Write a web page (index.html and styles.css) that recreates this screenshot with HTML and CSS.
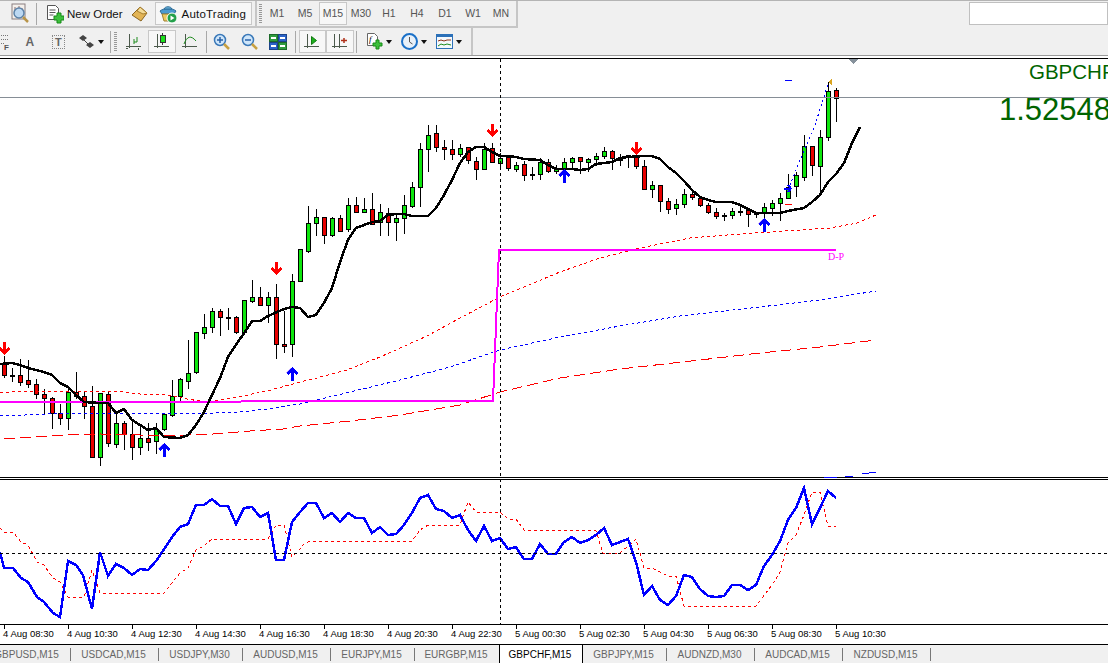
FILE: index.html
```html
<!DOCTYPE html>
<html lang="en">
<head>
  <meta charset="UTF-8">
  <title>GBPCHF,M15</title>
  <link rel="stylesheet" href="styles.css">
</head>
<body>
  <div id="toolbars">
    <div class="row row-top">
      <div class="bar bar-main">
        <span class="btn first-btn">
          <svg width="20" height="22" viewBox="0 0 20 22"><rect x="2" y="1" width="13" height="15" fill="#f4f0ec" stroke="#8a7f80"/><path d="M5 4v9M9 3v7M12 5v8" stroke="#8a6a6a"/><circle cx="9" cy="10" r="5" fill="#bcd8f2" stroke="#5c82a8" stroke-width="1.5"/><path d="M13 14l5 5" stroke="#b8954a" stroke-width="2.5"/></svg>
        </span>
        <span class="sep sep-a"></span>
        <span class="btn new-order">
          <svg width="18" height="20" viewBox="0 0 18 20"><path d="M1.5 1.5h8l3 3v11h-11z" fill="#fff" stroke="#555"/><path d="M3.5 6h6M3.5 8.500h6M3.500 11h4" stroke="#555"/><path d="M8 12h3V9h4v3h3v4h-3v3h-4v-3H8z" fill="#3cc03c" stroke="#178a17"/></svg>
          <span class="label">New Order</span>
        </span>
        <span class="btn gold">
          <svg width="18" height="18" viewBox="0 0 18 18"><path d="M1 10L9 2l7 6-6 8z" fill="#e2b455" stroke="#8a6420"/><path d="M9 2l7 6-4 1-6-3z" fill="#f4dc98" stroke="#a87f30"/></svg>
        </span>
        <span class="btn auto-trading">
          <svg width="19" height="20" viewBox="0 0 19 20"><path d="M1 7c3-3 13-3 16 0l-2 3H3z" fill="#4a9ad0" stroke="#2d6b96"/><path d="M5 5c1-3 7-3 8 0z" fill="#6fb8e0" stroke="#2d6b96"/><path d="M3 10h12l-1 7H5z" fill="#ecc860" stroke="#a08030"/><circle cx="13" cy="14" r="5" fill="#22a04a" stroke="#fff"/><path d="M11.500 11.500l4 2.500-4 2.500z" fill="#fff"/></svg>
          <span class="label label-wide">AutoTrading</span>
        </span>
      </div>
      <div class="bar bar-periods">
        <span class="grip"></span>
        <span class="tf">M1</span>
        <span class="tf">M5</span>
        <span class="tf tf-on">M15</span>
        <span class="tf">M30</span>
        <span class="tf">H1</span>
        <span class="tf">H4</span>
        <span class="tf">D1</span>
        <span class="tf">W1</span>
        <span class="tf">MN</span>
      </div>
      <input class="search" type="text">
    </div>

    <div class="row row-bottom">
      <div class="bar bar-tools">
        <span class="tool-f">
          <svg width="10" height="18" viewBox="0 0 10 18"><path d="M1 2.500h8M1 6.500h8M1 10.500h4" stroke="#777" stroke-dasharray="1 1"/></svg>
          <span class="f-letter">F</span>
        </span>
        <span class="letter-a">A</span>
        <span class="tool-t">T</span>
        <span class="tool-arrows">
          <svg width="17" height="16" viewBox="0 0 17 16"><path d="M1 4l4-3 4 3-4 3zM8 11l4-3 4 3-4 3z" fill="#444"/><path d="M5 5l6 6" stroke="#444"/></svg>
          <i class="caret"></i>
        </span>
        <span class="sep sep-b"></span>
        <span class="grip"></span>
        <span class="icon28 first-chart">
          <svg width="18" height="18" viewBox="0 0 18 18"><path d="M4.500 1v14M1 13.500h15" stroke="#4c5a4c"/><path d="M13.500 15v2M1 15.500h2" stroke="#4c5a4c"/><path d="M9 11V6M12 4v5H9" fill="none" stroke="#1c8a1c"/></svg>
        </span>
        <span class="icon28 pressed">
          <svg width="18" height="18" viewBox="0 0 18 18"><path d="M4.500 1v14M1 13.500h15" stroke="#4c5a4c"/><path d="M9.500 0v12" stroke="#333"/><rect x="7.500" y="2.500" width="5" height="7" fill="#1ce01c" stroke="#333"/></svg>
        </span>
        <span class="icon28">
          <svg width="18" height="18" viewBox="0 0 18 18"><path d="M4.500 1v14M1 13.500h15" stroke="#4c5a4c"/><path d="M3 11c3-8 7-9 12-3" fill="none" stroke="#1c8a1c"/></svg>
        </span>
        <span class="sep sep-c"></span>
        <span class="icon28">
          <svg width="18" height="18" viewBox="0 0 18 18"><circle cx="7" cy="7" r="5.500" fill="#cfe6fa" stroke="#3a78b8" stroke-width="1.500"/><path d="M4 7h6M7 4v6" stroke="#2a62a8" stroke-width="1.500"/><path d="M11 11l5 5" stroke="#c8a040" stroke-width="2.500"/></svg>
        </span>
        <span class="icon28">
          <svg width="18" height="18" viewBox="0 0 18 18"><circle cx="7" cy="7" r="5.500" fill="#cfe6fa" stroke="#3a78b8" stroke-width="1.500"/><path d="M4 7h6" stroke="#2a62a8" stroke-width="1.500"/><path d="M11 11l5 5" stroke="#c8a040" stroke-width="2.500"/></svg>
        </span>
        <span class="icon28">
          <svg width="18" height="16" viewBox="0 0 18 16"><rect x="0.500" y="0.500" width="8" height="7" fill="#2e9c3e" stroke="#1c6a2a"/><rect x="9.500" y="0.500" width="8" height="7" fill="#2a62c8" stroke="#1c4488"/><rect x="0.500" y="8.500" width="8" height="7" fill="#2a62c8" stroke="#1c4488"/><rect x="9.500" y="8.500" width="8" height="7" fill="#2e9c3e" stroke="#1c6a2a"/><path d="M2 4h5M11 4h5M2 12h5M11 12h5" stroke="#fff" stroke-width="2"/></svg>
        </span>
        <span class="sep sep-d"></span>
        <span class="icon28 pressed">
          <svg width="18" height="18" viewBox="0 0 18 18"><path d="M4.500 1v14M1 13.500h15" stroke="#4c5a4c"/><path d="M8.500 3.500l5 4-5 4z" fill="#1cb01c" stroke="#127a12"/></svg>
        </span>
        <span class="icon28 pressed">
          <svg width="18" height="18" viewBox="0 0 18 18"><path d="M3.500 1v14M8.500 1v14M1 13.500h15" stroke="#4c5a4c"/><path d="M10 7.500h6M13 5v5" stroke="#b03018" stroke-width="1.500"/></svg>
        </span>
        <span class="sep sep-e"></span>
        <span class="tool-drop">
          <svg width="17" height="17" viewBox="0 0 17 17"><path d="M1.500 0.500h7l3 3v9h-10z" fill="#fff" stroke="#666"/><text class="f-mark" x="3" y="9">f</text><path d="M7 10h3V7h3v3h3v3h-3v3h-3v-3H7z" fill="#3cc03c" stroke="#178a17"/></svg>
          <i class="caret"></i>
        </span>
        <span class="tool-drop">
          <svg width="17" height="17" viewBox="0 0 17 17"><circle cx="8.500" cy="8.500" r="7.500" fill="#e8f0f8" stroke="#1a70c8" stroke-width="2"/><path d="M8.500 4v5l3 2" fill="none" stroke="#555"/></svg>
          <i class="caret"></i>
        </span>
        <span class="tool-drop">
          <svg width="17" height="15" viewBox="0 0 17 15"><rect x="0.500" y="0.500" width="16" height="14" fill="#f4f8fc" stroke="#2c70b8"/><rect x="1" y="1" width="15" height="2" fill="#2c70b8"/><path d="M2 7l3-1 3 1 3-1 4 0" fill="none" stroke="#8a3018"/><path d="M2 12l3-2 3 1 3-1 4 1" fill="none" stroke="#1c8a1c"/></svg>
          <i class="caret"></i>
        </span>
      </div>
    </div>
  </div>

  <svg id="chart" viewBox="0 56 1108 569" width="1108" height="569">
    <path class="frame" d="M0 58.500h1108M0 477.500h1108M0 479.500h1108M0 624.500h1108"/>
    <g id="candles"></g>
    <g id="lines"></g>
    <path class="price-line" d="M0 97.500h1108"/>
    <path class="cross" d="M500.500 59v565"/>
    <path class="level" d="M0 553.500h1108"/>
    <path class="shift-mark" d="M849 59h9l-4.500 5z"/>
    <path class="gold-mark" d="M832 78v7l-4-3z"/>
    <path class="dash-blue" d="M785 80.500h7"/>
    <path class="dash-red" d="M785 204.500h7"/>
    <path class="arrow-blue" d="M784 188.500h7M788 185l3 3.500-3 3.500"/>
    <text class="symbol" x="1029" y="79">GBPCHF</text>
    <text class="price" x="999" y="120">1.52548</text>
    <text class="dp" x="828" y="260">D-P</text>
  </svg>

  <div id="axis">
    <span class="tick">4 Aug 08:30</span>
    <span class="tick">4 Aug 10:30</span>
    <span class="tick">4 Aug 12:30</span>
    <span class="tick">4 Aug 14:30</span>
    <span class="tick">4 Aug 16:30</span>
    <span class="tick">4 Aug 18:30</span>
    <span class="tick">4 Aug 20:30</span>
    <span class="tick">4 Aug 22:30</span>
    <span class="tick">5 Aug 00:30</span>
    <span class="tick">5 Aug 02:30</span>
    <span class="tick">5 Aug 04:30</span>
    <span class="tick">5 Aug 06:30</span>
    <span class="tick">5 Aug 08:30</span>
    <span class="tick">5 Aug 10:30</span>
  </div>

  <div id="tabs">
    <span class="tab tab-wide tab-clipped">GBPUSD,M15</span>
    <span class="tab tab-wide">USDCAD,M15</span>
    <span class="tab">USDJPY,M30</span>
    <span class="tab tab-wide">AUDUSD,M15</span>
    <span class="tab">EURJPY,M15</span>
    <span class="tab tab-before">EURGBP,M15</span>
    <span class="tab tab-active">GBPCHF,M15</span>
    <span class="tab">GBPJPY,M15</span>
    <span class="tab tab-wide">AUDNZD,M30</span>
    <span class="tab tab-wide">AUDCAD,M15</span>
    <span class="tab tab-wide">NZDUSD,M15</span>
  </div>

  <script src="chart.js"></script>
</body>
</html>
```

FILE: styles.css
```css
html, body {
  margin: 0;
  height: 100%;
  overflow: hidden;
}

body {
  width: 1108px;
  height: 663px;
  display: flex;
  flex-direction: column;
  background-color: #fff;
  font-family: "Liberation Sans", Arial, sans-serif;
}

#toolbars {
  height: 54px;
  background-color: #f0f0f0;
  border-top: 1px solid #b4b4b4;
  border-bottom: 1px solid #9a9a9a;
  box-shadow: 0 1px 0 #c8c8c8;
}

.row {
  display: flex;
}

.row-top {
  height: 27px;
}

.row-bottom {
  height: 27px;
}

.bar {
  display: flex;
  align-items: center;
  box-sizing: border-box;
  height: 100%;
  border-right: 2px solid #c6c6c6;
}

.row-top .bar {
  border-bottom: 2px solid #c6c6c6;
}

.bar-main {
  width: 257px;
}

.bar-periods {
  width: 261px;
}

.btn {
  display: flex;
  align-items: center;
}

.first-btn {
  margin-left: 10px;
}

.sep {
  width: 1px;
  height: 22px;
  background-color: #a8a8a8;
}

.sep-a {
  margin-left: 6px;
}

.new-order {
  margin-left: 9px;
  gap: 3px;
}

.gold {
  margin-left: 8px;
}

.auto-trading {
  box-sizing: border-box;
  height: 23px;
  width: 97px;
  margin-left: 6px;
  padding-left: 3px;
  gap: 4px;
  border: 1px solid #c8c8c8;
  background-color: #f7f7f7;
}

.label {
  font-size: 11.500px;
  color: #111;
}

.label-wide {
  letter-spacing: 0.2px;
}

.grip {
  width: 3px;
  height: 20px;
  margin-left: 2px;
  background: repeating-linear-gradient(#999 0 1px, transparent 1px 2px);
}

.tf {
  box-sizing: border-box;
  width: 28px;
  height: 23px;
  line-height: 21px;
  text-align: center;
  font-size: 10.500px;
  color: #555;
  border: 1px solid transparent;
}

.bar-periods .grip + .tf {
  margin-left: 1px;
}

.tf-on {
  border-color: #c8c8c8;
  background-color: #f7f7f7;
}

.search {
  box-sizing: border-box;
  width: 139px;
  height: 23px;
  margin: 1px 0 0 auto;
  padding: 0;
  background-color: #fff;
  border: 1px solid #c0c0c0;
}

.bar-tools {
  width: 473px;
}

.tool-f {
  display: flex;
  width: 10px;
  position: relative;
}

.f-letter {
  position: absolute;
  left: 4px;
  top: 10px;
  font-size: 8px;
  font-weight: bold;
  color: #555;
}

.letter-a {
  width: 12px;
  margin-left: 14px;
  text-align: center;
  font-size: 12px;
  font-weight: bold;
  color: #666;
}

.tool-t {
  box-sizing: border-box;
  width: 13px;
  height: 14px;
  margin-left: 16px;
  line-height: 12px;
  text-align: center;
  font-size: 11px;
  font-weight: bold;
  color: #666;
  border: 1px dotted #888;
}

.tool-arrows {
  display: flex;
  align-items: center;
  margin-left: 13px;
  gap: 3px;
}

.caret {
  width: 0;
  height: 0;
  border-left: 3.500px solid transparent;
  border-right: 3.500px solid transparent;
  border-top: 4px solid #111;
}

.sep-b {
  margin-left: 6px;
}

.first-chart {
  margin-left: 4px;
}

.row-bottom .grip {
  margin-left: 3px;
}

.icon28 {
  box-sizing: border-box;
  display: flex;
  align-items: center;
  justify-content: center;
  width: 28px;
  height: 23px;
  border: 1px solid transparent;
}

.pressed {
  border-color: #c8c8c8;
  background-color: #f7f7f7;
}

.sep-c {
  margin: 0 2px;
}

.sep-d {
  margin: 0 3px;
}

.sep-e {
  margin: 0 9px 0 2px;
}

.tool-drop {
  display: flex;
  align-items: center;
  gap: 3px;
  margin-right: 9px;
}

.f-mark {
  font-family: "Liberation Serif", serif;
  font-size: 9px;
  font-style: italic;
}

#chart {
  display: block;
  flex: none;
  background-color: #fff;
}

#chart path,
#chart polyline {
  fill: none;
  shape-rendering: crispEdges;
}

.frame {
  stroke: #000;
}

.price-line {
  stroke: #868e96;
}

.cross {
  stroke: #000;
  stroke-dasharray: 3 3;
}

.level {
  stroke: #000;
  stroke-dasharray: 3 3;
}

#chart .shift-mark {
  fill: #87929c;
}

#chart .gold-mark {
  fill: #daa520;
}

.dash-blue,
.arrow-blue {
  stroke: #00f;
}

.dash-red {
  stroke: #f00;
}

.arrow-blue {
  stroke-width: 2;
}

.symbol {
  font-family: "Liberation Sans", Arial, sans-serif;
  font-size: 20.500px;
  fill: #006400;
}

.price {
  font-family: "Liberation Sans", Arial, sans-serif;
  font-size: 31px;
  fill: #006400;
}

.dp {
  font-family: "Liberation Serif", serif;
  font-size: 10px;
  fill: #f0f;
}

.wick {
  stroke: #000;
}

.up {
  fill: #0ee60e;
  stroke: #000;
}

.down {
  fill: #e80000;
  stroke: #000;
}

.ma {
  stroke: #000;
  stroke-width: 2.500;
}

.magenta {
  stroke: #f0f;
  stroke-width: 2;
}

.red-dots {
  stroke: #f00;
  stroke-dasharray: 3 3;
}

.blue-dots {
  stroke: #00f;
  stroke-dasharray: 3 3;
}

.blue-bottom {
  stroke: #00f;
}

.red-long {
  stroke: #f00;
  stroke-dasharray: 11 5;
}

.blue-fast {
  stroke: #00f;
  stroke-dasharray: 2 3;
}

.stoch {
  stroke: #00f;
  stroke-width: 2.500;
}

.signal {
  stroke: #f00;
  stroke-dasharray: 3 3;
}

.arrow-up {
  stroke: #00f;
}

.arrow-down {
  stroke: #f00;
}

.halo-up {
  stroke: #c4a8ff;
}

.halo-down {
  stroke: #ffb070;
}

#chart .arrow-up,
#chart .arrow-down {
  stroke-width: 2.500;
}

#chart .halo-up,
#chart .halo-down {
  stroke-width: 3.500;
}

#axis {
  display: flex;
  flex: none;
  height: 19px;
  padding-left: 3px;
  background-color: #fff;
}

.tick {
  flex: none;
  width: 64px;
  padding-top: 3px;
  box-sizing: border-box;
  line-height: 12px;
  font-size: 9.500px;
  color: #000;
  background: linear-gradient(#000, #000) 1px 0 / 1px 4px no-repeat;
}

#tabs {
  display: flex;
  flex: none;
  height: 19px;
  box-sizing: border-box;
  overflow: hidden;
  background-color: #f0f0f0;
  border-top: 1px solid #000;
}

.tab {
  flex: none;
  box-sizing: border-box;
  width: 84px;
  height: 13px;
  margin-top: 3px;
  padding-right: 2px;
  line-height: 13px;
  text-align: center;
  font-size: 10px;
  color: #666;
  border-right: 1px solid #777;
}

.tab-wide {
  width: 88px;
}

.tab-clipped {
  margin-left: -17px;
  padding-right: 0;
}

.tab-before {
  border-right: 0;
}

.tab-active {
  height: 19px;
  margin-top: -1px;
  padding-top: 3px;
  color: #000;
  background-color: #fff;
  border-left: 1px solid #000;
  border-right: 1px solid #000;
  border-top: 1px solid #000;
}
```

FILE: chart.js
```js
// bars are 8px apart, first one at x=4. each row: high, top of body, bottom of body, low, direction
const bars = [
  [356,363,375,377,'d'],[368,375,375,381,'d'],[359,375,382,385,'d'],[360,380,384,387,'d'],
  [379,384,394,398,'d'],[389,394,398,413,'d'],[397,398,413,428,'d'],[404,413,418,424,'d'],
  [388,392,418,429,'u'],[372,392,396,398,'d'],[392,396,406,418,'d'],[386,406,457,457,'d'],
  [393,393,457,465,'u'],[392,394,443,446,'d'],[413,423,444,447,'u'],[421,423,434,449,'d'],
  [420,434,447,459,'d'],[427,438,447,454,'u'],[423,438,442,450,'d'],[423,429,441,453,'u'],
  [413,414,429,430,'u'],[380,396,415,416,'u'],[378,379,396,401,'u'],[340,373,381,388,'u'],
  [332,332,372,373,'u'],[314,327,333,338,'u'],[308,311,327,332,'u'],[309,311,317,335,'d'],
  [308,317,317,329,'d'],[316,317,332,333,'d'],[300,300,332,332,'u'],[280,297,301,302,'u'],
  [287,297,305,305,'d'],[292,297,305,322,'u'],[284,297,344,358,'d'],[311,344,346,352,'d'],
  [274,281,344,356,'u'],[249,249,281,281,'u'],[206,223,251,252,'u'],[209,217,223,235,'u'],
  [217,217,235,243,'d'],[217,218,235,236,'u'],[215,218,231,231,'d'],[198,205,229,231,'u'],
  [197,205,212,212,'d'],[198,209,212,212,'u'],[193,209,224,224,'d'],[204,212,222,235,'u'],
  [208,213,222,235,'d'],[213,218,222,240,'u'],[195,205,218,233,'u'],[182,187,206,207,'u'],
  [143,149,187,206,'u'],[125,135,149,171,'u'],[125,133,147,151,'d'],[140,147,149,159,'d'],
  [140,149,154,159,'d'],[144,148,154,156,'u'],[147,147,160,163,'d'],[157,161,169,179,'d'],
  [143,149,169,169,'u'],[143,148,162,162,'d'],[153,158,163,167,'u'],[155,157,168,170,'d'],
  [162,165,169,171,'u'],[161,164,175,180,'d'],[167,174,174,179,'d'],[158,162,174,179,'u'],
  [159,162,171,172,'d'],[165,169,171,173,'u'],[158,162,169,180,'u'],[157,158,162,167,'u'],
  [157,157,161,173,'d'],[158,159,162,171,'u'],[153,156,159,165,'u'],[147,151,156,158,'u'],
  [150,151,158,169,'d'],[154,159,159,165,'d'],[155,155,157,167,'u'],[145,157,166,168,'d'],
  [160,166,189,189,'d'],[181,185,189,197,'u'],[185,185,201,211,'d'],[198,201,209,213,'d'],
  [199,204,208,214,'u'],[189,194,204,207,'u'],[190,194,197,199,'d'],[196,198,205,206,'d'],
  [203,205,212,213,'d'],[208,212,216,218,'d'],[213,215,215,220,'d'],[208,211,215,218,'u'],
  [207,211,211,215,'d'],[208,210,214,226,'d'],[212,213,213,217,'d'],[203,207,213,220,'u'],
  [200,203,208,215,'u'],[193,198,203,220,'u'],[174,187,198,198,'u'],[172,175,186,196,'u'],
  [135,146,177,180,'u'],[146,146,165,175,'d'],[130,137,166,192,'u'],[82,91,137,140,'u'],
  [88,90,98,121,'d']
];

const series = [
  ['red-long', '4,439 33,437 67,435 100,434 140,435 187,435 213,434 250,431 283,429 300,426 350,421 400,415 460,405 500,392 560,378 620,369 700,360 760,353 820,347 876,340'],
  ['blue-dots', '0,416 25,415 45,414 83,413 133,413 167,413 187,414 213,413 240,412 267,409 300,404 350,392 400,380 450,367 500,350 560,337 620,326 680,316 760,307 820,300 876,291'],
  ['red-dots', '0,393 25,391 67,391 100,391 123,392 140,394 167,395 187,399 200,401 213,401 233,398 267,391 300,382 313,379 347,370 380,357 427,336 460,318 500,297 560,272 600,258 640,248 690,238 740,234 770,232 830,228 857,223 876,215'],
  ['blue-bottom', '824,477 837,477'],
  ['blue-bottom', '845,477 853,476'],
  ['blue-bottom', '862,474 876,472'],
  ['blue-fast', '788,190 800,160 815,125 828,84'],
  ['magenta', '0,402 493,401 499,250 836,250'],
  ['ma', '0,364 12,363 20,365 28,368 36,370 44,372 52,375 60,383 68,387 76,395 84,402 100,403 108,403 116,413 124,409 132,420 140,425 148,430 156,428 164,437 180,438 188,435 196,425 204,412 212,395 220,378 228,357 237,343 245,332 252,321 260,321 268,316 277,312 284,309 292,307 300,308 308,317 316,315 324,303 332,288 340,262 348,240 356,228 364,225 372,222 380,221 388,215 396,214 404,214 412,216 428,216 436,208 444,195 452,180 460,163 468,152 476,147 484,147 492,152 500,156 508,156 516,157 524,159 540,160 548,165 556,169 572,169 580,170 588,169 596,164 604,163 612,162 620,158 628,157 644,156 652,156 660,159 668,167 676,173 684,181 692,190 700,197 708,200 716,202 732,202 740,205 748,209 756,213 780,213 788,211 804,208 812,202 820,195 828,182 836,174 844,163 852,143 860,127'],
  ['signal', '0,528 4,532 13,532 21,542 28,545 37,562 44,565 53,578 60,582 68,597 84,597 92,570 100,593 164,593 172,583 180,573 188,568 196,550 204,546 212,539 268,539 276,525 284,525 292,557 300,549 304,544 310,541 412,541 420,530 428,525 460,525 468,502 476,512 500,512 508,519 516,519 524,530 588,530 596,531 603,553 620,553 636,539 644,568 652,568 668,576 676,576 684,606 756,606 772,585 780,572 788,543 796,535 804,515 812,492 820,492 828,526 836,526'],
  ['stoch', '0,552 4,568 13,568 21,578 28,582 37,597 44,602 53,613 60,617 68,561 76,565 83,575 92,609 100,552 108,576 116,564 124,568 132,575 140,569 148,570 157,560 172,537 180,527 188,524 196,505 204,505 212,499 220,506 228,506 236,524 244,508 252,507 260,517 268,513 276,560 284,560 292,522 300,512 308,503 316,503 324,518 332,513 340,522 348,513 356,518 364,518 372,533 380,527 388,535 396,534 404,525 412,513 420,498 428,495 436,509 444,511 452,518 460,515 468,530 476,541 484,526 492,541 500,538 508,549 516,547 524,559 532,559 540,544 548,554 556,554 564,542 572,537 580,543 588,540 596,535 604,528 612,545 620,542 628,539 636,562 644,595 652,586 660,600 668,605 676,596 684,575 692,577 700,589 708,596 716,597 724,596 732,585 740,585 748,590 756,585 764,566 772,555 780,541 788,520 796,508 804,488 812,524 820,508 828,491 836,498']
];

// x, top of the glyph
const downArrows = [[4, 342], [276, 262], [492, 124], [636, 142]];
const upArrows = [[164, 444], [292, 368], [564, 170], [764, 219]];

let candleSvg = '';
bars.forEach((b, i) => {
  const x = 4.5 + i * 8;
  candleSvg += `<path class="wick" d="M${x} ${b[0]}V${b[3] + 1}"/>`;
  candleSvg += `<rect class="${b[4] === 'u' ? 'up' : 'down'}" shape-rendering="crispEdges" x="${x - 2}" y="${b[1] + 0.5}" width="4" height="${Math.max(b[2] - b[1], 1)}"/>`;
});
document.getElementById('candles').innerHTML = candleSvg;

let lineSvg = '';
series.forEach(s => {
  lineSvg += `<polyline class="${s[0]}" points="${s[1]}"/>`;
});
downArrows.forEach(a => {
  const x = a[0] + 0.5;
  const d = `M${x} ${a[1]}V${a[1] + 12}M${x - 5} ${a[1] + 6}L${x} ${a[1] + 11}L${x + 5} ${a[1] + 6}`;
  lineSvg += `<path class="halo-down" d="${d}"/><path class="arrow-down" d="${d}"/>`;
});
upArrows.forEach(a => {
  const x = a[0] + 0.5;
  const d = `M${x} ${a[1] + 13}V${a[1] + 1}M${x - 5} ${a[1] + 6}L${x} ${a[1] + 1}L${x + 5} ${a[1] + 6}`;
  lineSvg += `<path class="halo-up" d="${d}"/><path class="arrow-up" d="${d}"/>`;
});
document.getElementById('lines').innerHTML = lineSvg;
```
